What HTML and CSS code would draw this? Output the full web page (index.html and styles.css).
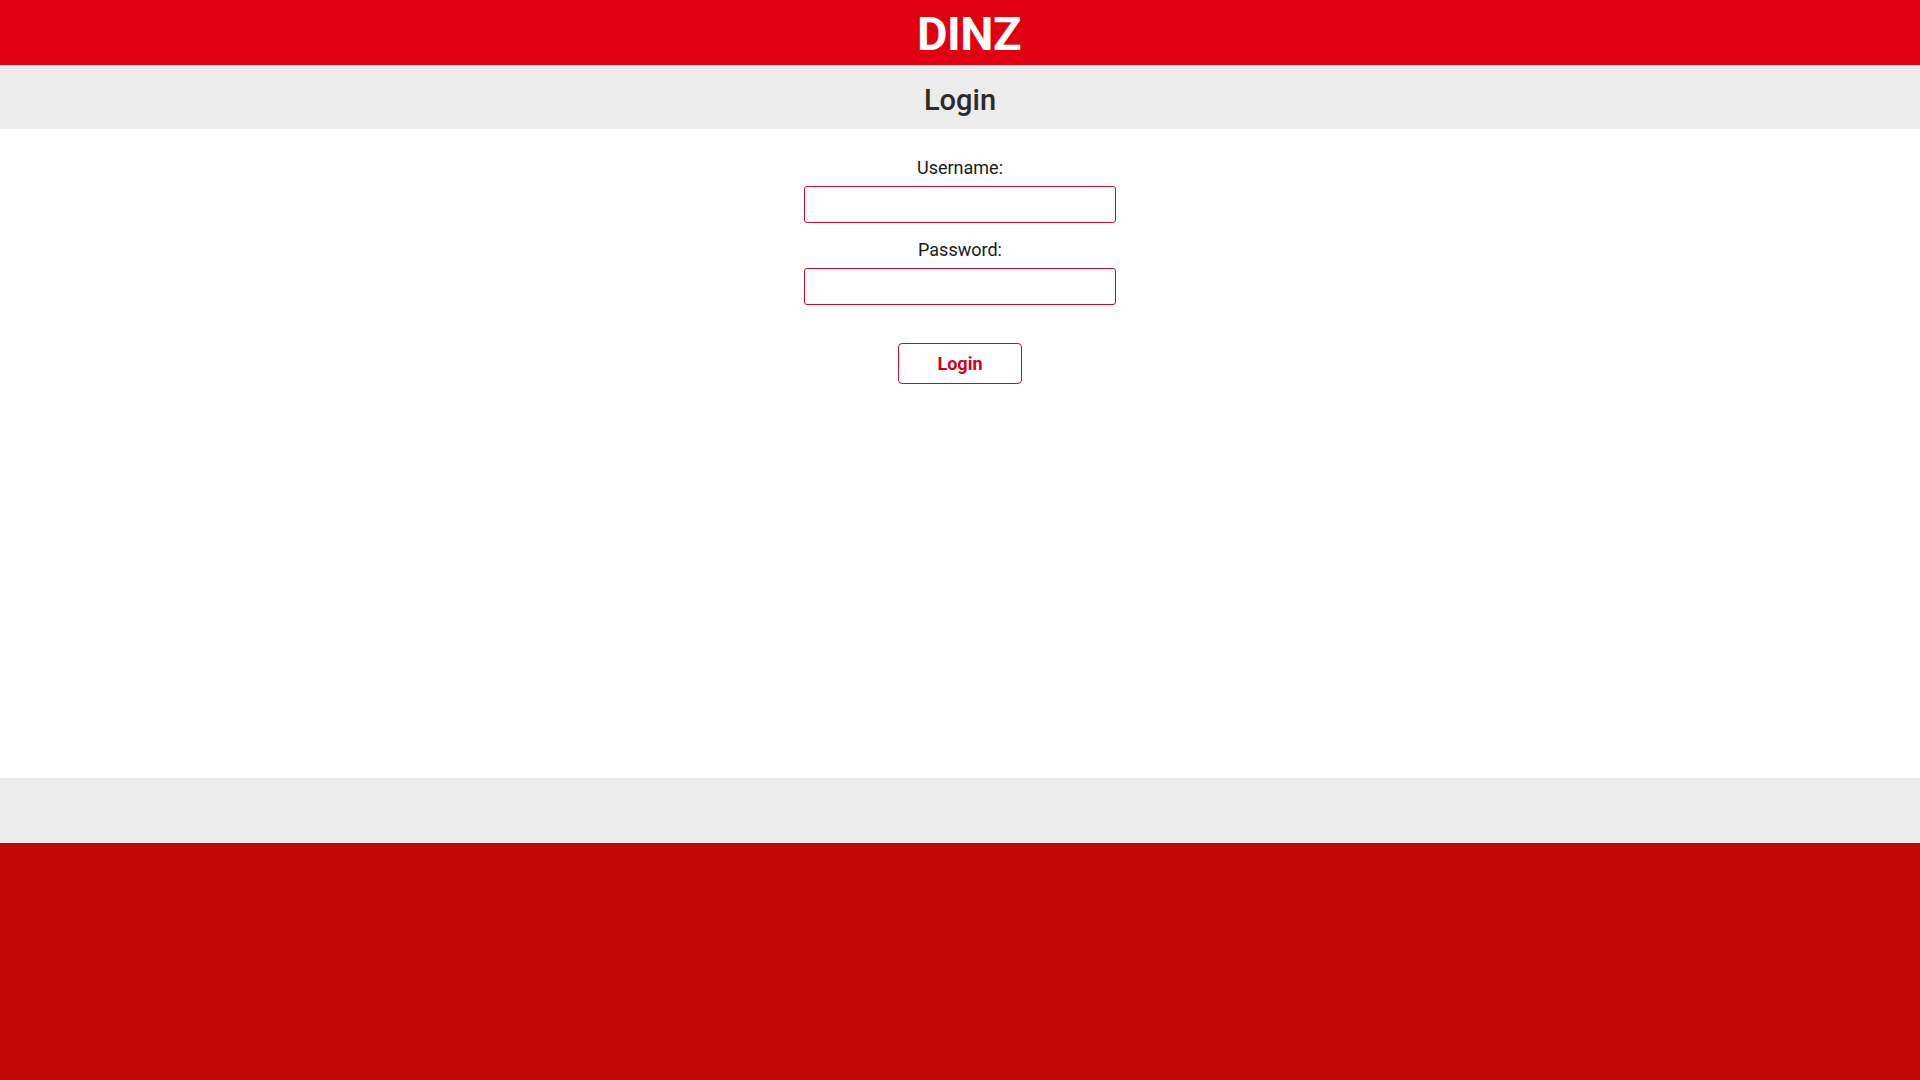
FILE: index.html
```html
<!DOCTYPE html>
<html lang="en">
<head>
<meta charset="utf-8">
<title>DINZ - Login</title>
<link rel="stylesheet" href="styles.css">
</head>
<body>
<div class="page">
  <header class="topbar"><span class="brand">DINZ</span></header>
  <div class="titlebar"><h1 class="title">Login</h1></div>
  <main class="main">
    <form class="login-form">
      <label class="field-label" for="username">Username:</label>
      <input class="field-input" id="username" type="text">
      <label class="field-label field-label--second" for="password">Password:</label>
      <input class="field-input" id="password" type="password">
      <button class="login-btn" type="button">Login</button>
    </form>
  </main>
  <div class="footer-bar"></div>
  <footer class="footer"></footer>
</div>
</body>
</html>
```

FILE: styles.css
```css
html, body {
  margin: 0;
  padding: 0;
  height: 100%;
}
body {
  font-family: Roboto, "Liberation Sans", Arial, sans-serif;
  color: #222;
  background: #fff;
}
.page {
  display: flex;
  flex-direction: column;
  height: 1080px;
}
.topbar {
  height: 65px;
  background: #e0000f;
  display: flex;
  justify-content: center;
  align-items: center;
  padding-left: 18px;
  box-sizing: border-box;
}
.brand {
  color: #fff;
  font-weight: 700;
  font-size: 47px;
  line-height: 65px;
  letter-spacing: -0.5px;
  padding-top: 2px;
}
.titlebar {
  height: 64px;
  background: #ececec;
  display: flex;
  justify-content: center;
  align-items: center;
}
.title {
  margin: 0;
  font-size: 29px;
  font-weight: 500;
  color: #2b2b2b;
  line-height: 34px;
  padding-top: 5px;
}
.main {
  height: 649px;
  display: flex;
  justify-content: center;
  padding-top: 28px;
  box-sizing: border-box;
}
.login-form {
  width: 312px;
  display: flex;
  flex-direction: column;
  align-items: center;
}
.field-label {
  font-size: 18px;
  line-height: 21px;
  color: #1a1a1a;
  margin-bottom: 8px;
}
.field-label--second {
  margin-top: 16px;
}
.field-input {
  width: 312px;
  height: 37px;
  box-sizing: border-box;
  border: 1px solid #c0102a;
  border-radius: 3px;
  background: #fff;
  margin: 0;
  outline: none;
  font-family: inherit;
  font-size: 16px;
}
.login-btn {
  margin-top: 38px;
  width: 124px;
  height: 41px;
  box-sizing: border-box;
  border: 1px solid #c0102a;
  border-radius: 4px;
  background: #fff;
  color: #d0001a;
  font-family: inherit;
  font-weight: 700;
  font-size: 18px;
  cursor: pointer;
}
.footer-bar {
  height: 65px;
  background: #ececec;
}
.footer {
  flex: 1;
  background: #c00808;
}
```
